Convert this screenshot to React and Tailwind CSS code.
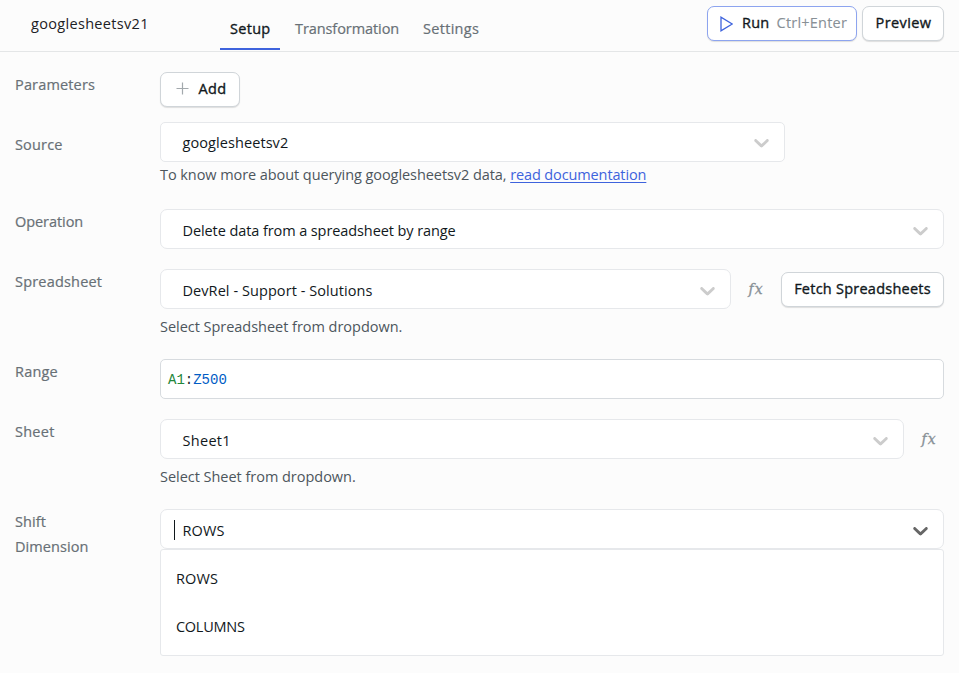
import { Fragment } from 'react';

const TABS = [
  { label: 'Transformation', className: 'w-[104px] tracking-[-0.08px]' },
  { label: 'Settings', className: 'w-[58px] tracking-[0.3px]' }
];

const OPTIONS = [
  { label: 'ROWS', className: 'tracking-[0.15px]' },
  { label: 'COLUMNS', className: 'tracking-[-0.27px]' }
];

export default function App() {
  return (
    <div className="h-[673px] w-[959px] overflow-hidden bg-[#fcfcfc] font-['Open_Sans',sans-serif] text-[14.5px] leading-[25px] text-[#11181c]">
      <header className="flex h-[52px] items-start border-b border-[#e4e6e7]">
        <div className="w-[220px] pl-[31px] pt-[11px] tracking-[0.32px] text-[#1d2125]">googlesheetsv21</div>
        <nav className="flex h-[50px] flex-1 pt-[16px] text-[#687076] [-webkit-text-stroke:0.2px]">
          <div className="mr-[15px] w-[60px] border-b-2 border-[#3e63dd] pl-[10px] tracking-[0.3px] text-[#11181c] [-webkit-text-stroke:0.35px]">
            Setup
          </div>
          {TABS.map((tab) => (
            <div key={tab.label} className={`mr-6 whitespace-nowrap ${tab.className}`}>
              {tab.label}
            </div>
          ))}
        </nav>
        <div className="flex gap-[5px] pr-[15px] pt-[6px]">
          <Button border="border-[#8da4ef]" className="w-[150px] pl-[3px]">
            <svg
              className="mr-[9px] mt-0.5 h-4 w-[13px]"
              viewBox="0 0 13 16"
              fill="none"
              stroke="#3e63dd"
              strokeWidth="1.3"
            >
              <path d="M1 1.2v13.6L12.2 8z" />
            </svg>
            <span className="tracking-[0.3px]">Run</span>
            <span className="ml-[7px] tracking-[0.22px] text-[#889096] [-webkit-text-stroke:0.1px]">Ctrl+Enter</span>
          </Button>
          <Button className="w-[82px] pl-px tracking-[0.4px]">Preview</Button>
        </div>
      </header>

      <main className="px-[15px] pt-5">
        <Field label="Parameters" className="h-[50px]" labelClass="tracking-[0.16px]">
          <Button className="w-20 pl-[3px]">
            <svg className="mr-[9px] h-[13px] w-[13px]" viewBox="0 0 13 13" stroke="#a3a9ad" strokeWidth="1.2">
              <path d="M6.5 0.5v12M0.5 6.5h12" />
            </svg>
            <span className="tracking-[0.4px]">Add</span>
          </Button>
        </Field>

        <Field label="Source" className="h-[87px]" labelClass="pt-[10px] tracking-[0.16px]">
          <Select value="googlesheetsv2" className="w-[625px] rounded-[5px] pt-px tracking-[0.08px]" />
          <p className="whitespace-nowrap tracking-[-0.07px] text-[#4d565c]">
            To know more about querying googlesheetsv2 data,{' '}
            <a className="tracking-[-0.12px] text-[#3e63dd] underline underline-offset-2">read documentation</a>
          </p>
        </Field>

        <Field label="Operation" className="h-[60px]" labelClass="tracking-[-0.06px]">
          <Select
            value="Delete data from a spreadsheet by range"
            className="w-full rounded-[7px] pt-[2px] tracking-[-0.09px]"
          />
        </Field>

        <Field label="Spreadsheet" className="h-[90px]" labelClass="tracking-[0.19px]">
          <div className="flex">
            <Select
              value="DevRel - Support - Solutions"
              className="w-[571px] rounded-[7px] pt-[2px] tracking-[0.07px]"
            />
            <Fx />
            <Button className="mt-[3px] w-[163px] tracking-[0.24px]">Fetch Spreadsheets</Button>
          </div>
          <Hint>Select Spreadsheet from dropdown.</Hint>
        </Field>

        <Field label="Range" className="h-[60px]" labelClass="tracking-[0.2px]">
          <div className="flex h-10 items-center rounded-[5px] border border-[#d7dbdf] bg-white pl-[7px] pt-px font-['Liberation_Mono',monospace] text-sm">
            <span className="text-[#22863a]">A1</span>
            <span className="text-[#24292e]">:</span>
            <span className="text-[#005cc5]">Z500</span>
          </div>
        </Field>

        <Field label="Sheet" className="h-[90px]" labelClass="tracking-[0.25px]">
          <div className="flex justify-between">
            <Select value="Sheet1" className="w-[744px] rounded-[7px] pt-[2px] tracking-[0.3px]" />
            <Fx className="-mr-[10px]" />
          </div>
          <Hint>Select Sheet from dropdown.</Hint>
        </Field>

        <Field label={['Shift', 'Dimension']} labelClass="tracking-[0.08px]">
          <Select value="ROWS" open className="w-full rounded-[7px] pt-[2px] tracking-[0.15px]" />
          <ul className="h-[107px] rounded-[3px] border border-[#e6e8eb] bg-white pl-[15px] pt-[5px]">
            {OPTIONS.map((opt) => (
              <li key={opt.label} className={`h-12 leading-[48px] ${opt.className}`}>
                {opt.label}
              </li>
            ))}
          </ul>
        </Field>
      </main>
    </div>
  );
}

function Field({ label, className = '', labelClass = '', children }) {
  const lines = Array.isArray(label) ? label : [label];
  return (
    <div className={`flex items-start ${className}`}>
      <div className={`w-[145px] shrink-0 text-[#687076] [-webkit-text-stroke:0.2px] ${labelClass}`}>
        {lines.map((line) => (
          <Fragment key={line}>
            {line}
            <br />
          </Fragment>
        ))}
      </div>
      <div className="min-w-0 flex-1">{children}</div>
    </div>
  );
}

function Select({ value, open, className = '' }) {
  return (
    <div className={`flex h-10 shrink-0 items-center border border-[#e6e8eb] bg-white pr-[10px] ${className}`}>
      <span className={`ml-[13px] mr-[7.5px] h-5 w-px ${open ? 'bg-[#11181c]' : ''}`} />
      <span className="flex-1">{value}</span>
      <svg className="h-[25px] w-[25px]" viewBox="0 0 20 20" fill={open ? '#666666' : '#cccccc'}>
        <path d="M4.516 7.548c0.436-0.446 1.043-0.481 1.576 0l3.908 3.747 3.908-3.747c0.533-0.481 1.141-0.446 1.574 0 0.436 0.445 0.408 1.197 0 1.615-0.406 0.418-4.695 4.502-4.695 4.502-0.217 0.223-0.502 0.335-0.787 0.335s-0.57-0.112-0.789-0.335c0 0-4.287-4.084-4.695-4.502s-0.436-1.17 0-1.615z" />
      </svg>
    </div>
  );
}

function Button({ border = 'border-[#d0d5d9]', className = '', children }) {
  return (
    <button
      className={`flex h-[35px] shrink-0 items-center justify-center whitespace-nowrap rounded-[7px] border bg-white pb-0.5 shadow-[0_1px_1px_rgba(0,0,0,0.12)] [-webkit-text-stroke:0.35px] ${border} ${className}`}
    >
      {children}
    </button>
  );
}

function Fx({ className = '' }) {
  return (
    <span
      className={`flex h-10 w-[50px] shrink-0 items-center justify-center pb-px font-['DejaVu_Serif',serif] text-sm italic tracking-[1px] text-[#889096] [-webkit-text-stroke:0.3px] ${className}`}
    >
      fx
    </span>
  );
}

function Hint({ children }) {
  return <p className="mt-[5px] tracking-[-0.03px] text-[#4d565c]">{children}</p>;
}
